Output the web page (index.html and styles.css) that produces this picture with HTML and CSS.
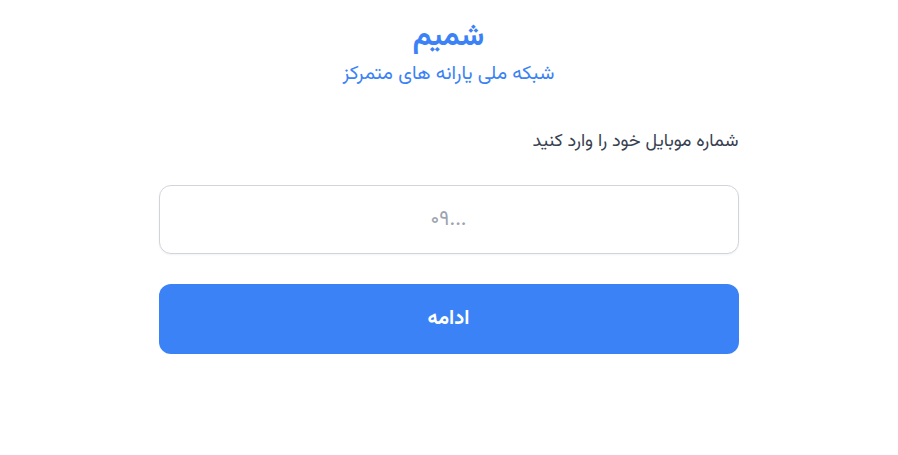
FILE: index.html
```html
<!DOCTYPE html>
<html lang="fa" dir="rtl">
<head>
    <meta charset="UTF-8">
    <meta name="viewport" content="width=device-width, initial-scale=1.0">
    <title>شمیم</title>
    <link rel="stylesheet" href="styles.css">
</head>
<body>
    <div class="container">
        <header class="brand">
            <h1>شمیم</h1>
            <p>شبکه ملی یارانه های متمرکز</p>
        </header>
        <form class="login-form">
            <label for="mobile">شماره موبایل خود را وارد کنید</label>
            <input type="tel" id="mobile" name="mobile" dir="ltr" placeholder="۰۹...">
            <button type="submit" class="submit-button">ادامه</button>
        </form>
    </div>
</body>
</html>
```

FILE: styles.css
```css
body {
    font-family: "Vazirmatn", "Noto Sans Arabic", "DejaVu Sans", sans-serif;
    background: #ffffff;
    margin: 0;
    color: #374151;
}

.container {
    width: 580px;
    margin: 0 auto;
    padding-top: 18px;
    padding-right: 1px;
}

.brand {
    text-align: center;
}

.brand h1 {
    margin: 0;
    font-size: 30px;
    font-weight: 700;
    color: #3b82f6;
    line-height: 40px;
}

.brand p {
    margin: 0;
    font-size: 19.5px;
    color: #3b82f6;
    line-height: 32px;
}

.login-form {
    display: flex;
    flex-direction: column;
    margin-top: 40px;
}

label {
    font-size: 18px;
    line-height: 24px;
    color: #374151;
    margin-bottom: 31px;
}

input {
    height: 69px;
    box-sizing: border-box;
    border: 1px solid #d1d5db;
    border-radius: 12px;
    font-family: inherit;
    font-size: 21px;
    text-align: center;
    outline: none;
    box-shadow: 0 1px 2px rgba(0, 0, 0, 0.05);
}

input::placeholder {
    color: #9ca3af;
}

.submit-button {
    margin-top: 30px;
    height: 70px;
    background-color: #3b82f6;
    color: #ffffff;
    border: none;
    border-radius: 12px;
    font-family: inherit;
    font-size: 20px;
    font-weight: 700;
    cursor: pointer;
}
```
